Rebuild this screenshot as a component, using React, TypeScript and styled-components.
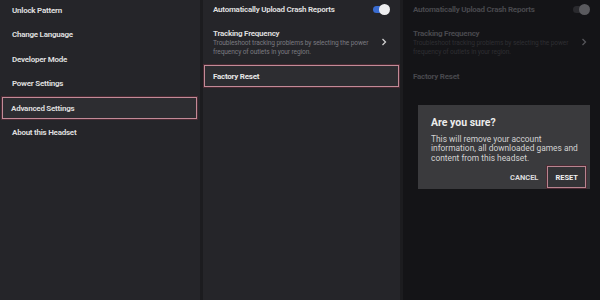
import React from "react";
import styled, { createGlobalStyle, css } from "styled-components";

const Global = createGlobalStyle`
  html, body { margin: 0; padding: 0; background: #141417; }
  body { font-family: Roboto, "Liberation Sans", sans-serif; }
`;

const Screen = styled.div`
  width: 600px;
  height: 300px;
  display: grid;
  grid-template-columns: 200px 200px 200px;
  background: #1b1b1e;
  overflow: hidden;
`;

const Panel = styled.div<{ $dim?: boolean; $first?: boolean }>`
  position: relative;
  background: ${(p) => (p.$dim ? "#141417" : "#252529")};
  border-left: ${(p) => (p.$first ? "none" : "3px solid #1c1c1f")};
  display: flex;
  flex-direction: column;
`;

const FirstList = styled.div`
  display: flex;
  flex-direction: column;
  margin-top: -2px;
`;

const MenuItem = styled.div<{ $active?: boolean }>`
  height: 24.5px;
  display: flex;
  align-items: center;
  padding-left: 10px;
  margin: 0 3px 0 2px;
  box-sizing: border-box;
  font-size: 8px;
  letter-spacing: -0.25px;
  font-weight: 700;
  color: #dcdcdc;
  ${(p) =>
    p.$active &&
    css`
      height: 22px;
      margin: 1px 3px 1.5px 2px;
      background: #2d2d31;
      border: 1px solid #c38a97;
      box-shadow: 0 0 0 1px #4a2a33;
      padding-left: 8px;
    `}
`;

const Row = styled.div<{ $dim?: boolean }>`
  display: flex;
  align-items: center;
  justify-content: space-between;
  padding: 0 13px 0 10px;
  color: ${(p) => (p.$dim ? "#48484d" : "#dcdcdc")};
  font-size: 8px;
  letter-spacing: -0.25px;
  font-weight: 700;
`;

const ToggleRow = styled(Row)`
  height: 19px;
  padding-right: 10px;
`;

const TrackRow = styled(Row)`
  height: 42px;
  align-items: flex-start;
  padding-top: 10px;
  box-sizing: border-box;
`;

const TrackText = styled.div`
  display: flex;
  flex-direction: column;
  line-height: 10px;
  flex-shrink: 0;
`;

const Sub = styled.div<{ $dim?: boolean }>`
  font-size: 6.6px;
  letter-spacing: -0.1px;
  font-weight: 400;
  line-height: 8.5px;
  white-space: nowrap;
  color: ${(p) => (p.$dim ? "#2e2e32" : "#7a7a80")};
`;

const Chevron = styled.span<{ $dim?: boolean }>`
  margin-top: 9px;
  color: ${(p) => (p.$dim ? "#55555a" : "#cfcfcf")};
  display: flex;
`;

const ResetRow = styled.div<{ $active?: boolean; $dim?: boolean }>`
  height: 22px;
  margin: 4px 1px 0 1px;
  display: flex;
  align-items: center;
  padding-left: 9px;
  box-sizing: border-box;
  font-size: 8px;
  letter-spacing: -0.25px;
  font-weight: 700;
  color: ${(p) => (p.$dim ? "#48484d" : "#e6e6e6")};
  ${(p) =>
    p.$active &&
    css`
      background: #2d2d31;
      border: 1px solid #c38a97;
      box-shadow: 0 0 0 1px #4a2a33;
      padding-left: 8px;
    `}
`;

const Toggle = styled.div<{ $dim?: boolean }>`
  position: relative;
  width: 14px;
  height: 7px;
  border-radius: 4px;
  background: ${(p) => (p.$dim ? "#2a2a2e" : "#3a6cd0")};
  margin-right: 3px;
  &::after {
    content: "";
    position: absolute;
    right: -3px;
    top: -2px;
    width: 11px;
    height: 11px;
    border-radius: 50%;
    background: ${(p) => (p.$dim ? "#5a5a5e" : "#eeeef0")};
  }
`;

const Dialog = styled.div`
  position: absolute;
  left: 15px;
  top: 105px;
  width: 172px;
  height: 84px;
  background: #3a3a3d;
  box-sizing: border-box;
  padding: 12px 4px 0 13px;
  display: flex;
  flex-direction: column;
`;

const DTitle = styled.div`
  font-size: 10.5px;
  line-height: 12px;
  font-weight: 700;
  color: #ececec;
`;

const DBody = styled.div`
  margin-top: 6px;
  font-size: 8.4px;
  line-height: 9.3px;
  color: #d2d2d2;
`;

const DActions = styled.div`
  margin-top: auto;
  margin-bottom: 1px;
  display: flex;
  justify-content: flex-end;
  align-items: center;
  gap: 4px;
`;

const DButton = styled.div<{ $boxed?: boolean }>`
  font-size: 7.5px;
  font-weight: 700;
  color: #dcdcdc;
  padding: 0 5px;
  height: 20px;
  display: flex;
  align-items: center;
  ${(p) =>
    p.$boxed &&
    css`
      background: #333336;
      border: 1px solid #b8848f;
      box-shadow: 0 0 0 1px #4a2a33;
      color: #f0f0f0;
      padding: 0 7px;
    `}
`;

const ChevronIcon = () => (
  <svg width="6" height="8" viewBox="0 0 6 8">
    <path d="M1.5 1 L4.5 4 L1.5 7" fill="none" stroke="currentColor" strokeWidth="1.3" />
  </svg>
);

const SettingsBody = ({ dim }: { dim?: boolean }) => (
  <>
    <ToggleRow $dim={dim}>
      Automatically Upload Crash Reports
      <Toggle $dim={dim} />
    </ToggleRow>
    <TrackRow $dim={dim}>
      <TrackText>
        Tracking Frequency
        <Sub $dim={dim}>
          Troubleshoot tracking problems by selecting the power
          <br />
          frequency of outlets in your region.
        </Sub>
      </TrackText>
      <Chevron $dim={dim}>
        <ChevronIcon />
      </Chevron>
    </TrackRow>
    <ResetRow $active={!dim} $dim={dim}>
      Factory Reset
    </ResetRow>
  </>
);

const menu = [
  "Unlock Pattern",
  "Change Language",
  "Developer Mode",
  "Power Settings",
  "Advanced Settings",
  "About this Headset",
];

export default function App() {
  return (
    <>
      <Global />
      <Screen>
        <Panel $first>
          <FirstList>
            {menu.map((m) => (
              <MenuItem key={m} $active={m === "Advanced Settings"}>
                {m}
              </MenuItem>
            ))}
          </FirstList>
        </Panel>
        <Panel>
          <SettingsBody />
        </Panel>
        <Panel $dim>
          <SettingsBody dim />
          <Dialog>
            <DTitle>Are you sure?</DTitle>
            <DBody>
              This will remove your account information, all downloaded games and content from this headset.
            </DBody>
            <DActions>
              <DButton>CANCEL</DButton>
              <DButton $boxed>RESET</DButton>
            </DActions>
          </Dialog>
        </Panel>
      </Screen>
    </>
  );
}
